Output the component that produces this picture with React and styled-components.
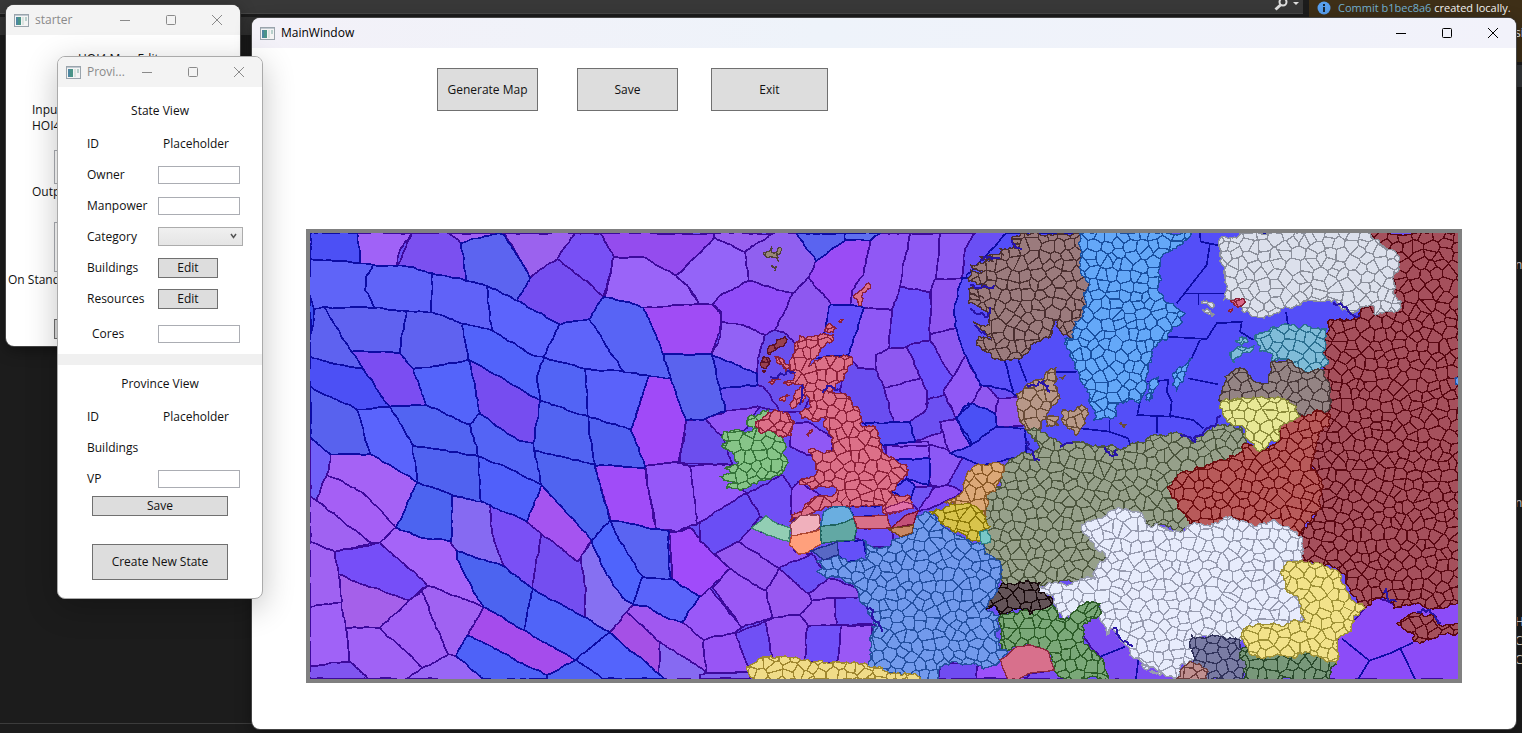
import React from "react";
import styled, { createGlobalStyle, css } from "styled-components";

const Global = createGlobalStyle`
  * { box-sizing: border-box; }
  body { margin: 0; background: #1c1c1c; overflow: hidden; }
  body, button, input, select {
    font-family: "Open Sans", "Noto Sans", sans-serif;
    font-size: 12px;
    line-height: 16px;
    color: #111;
  }
`;

/* ---------- map geometry ---------- */

const hash = (a, b) => {
  const s = Math.sin(a * 12.9898 + b * 78.233) * 43758.5453;
  return s - Math.floor(s);
};

const parse = (text, dx, dy) =>
  text.trim().split(/\s+/).map((pair) => {
    const [x, y] = pair.split(",").map(Number);
    return [x + dx, y + dy];
  });

// Midpoint displacement; the offset depends only on the edge, so shared borders agree.
const roughEdge = (a, b, amount, depth, limit = 9) => {
  const len = Math.hypot(b[0] - a[0], b[1] - a[1]);
  if (!depth || len < 9) return [a];
  const flip = a[0] > b[0] || (a[0] === b[0] && a[1] > b[1]) ? -1 : 1;
  const span = Math.min(len * amount, limit) / len;
  const k = (hash(a[0] + b[0], a[1] + b[1]) - 0.5) * span * flip;
  const mid = [
    (a[0] + b[0]) / 2 - (b[1] - a[1]) * k,
    (a[1] + b[1]) / 2 + (b[0] - a[0]) * k,
  ];
  return [
    ...roughEdge(a, mid, amount, depth - 1, limit),
    ...roughEdge(mid, b, amount, depth - 1, limit),
  ];
};

const rough = (pts, amount, depth, limit) =>
  pts.flatMap((p, i) => roughEdge(p, pts[(i + 1) % pts.length], amount, depth, limit));

const toPath = (pts, open) =>
  "M" + pts.map((p) => Math.round(p[0]) + " " + Math.round(p[1])).join("L") + (open ? "" : "Z");

const clipHalf = (poly, s, t) => {
  const nx = t[0] - s[0];
  const ny = t[1] - s[1];
  const c = (nx * (s[0] + t[0]) + ny * (s[1] + t[1])) / 2;
  const out = [];
  poly.forEach((p, i) => {
    const q = poly[(i + 1) % poly.length];
    const dp = nx * p[0] + ny * p[1] - c;
    const dq = nx * q[0] + ny * q[1] - c;
    if (dp <= 0) out.push(p);
    if (dp * dq < 0) {
      const r = dp / (dp - dq);
      out.push([p[0] + (q[0] - p[0]) * r, p[1] + (q[1] - p[1]) * r]);
    }
  });
  return out;
};

const STEP = 35;
const ROW = 30;
const seed = (i, j) => [
  (i + (j % 2 ? 0.5 : 0) + (hash(i, j) - 0.5) * 0.8) * STEP,
  (j + (hash(j + 311, i + 97) - 0.5) * 0.8) * ROW,
];

const provinceCells = (pts) => {
  const xs = pts.map((p) => p[0]);
  const ys = pts.map((p) => p[1]);
  const i0 = Math.floor(Math.min(...xs) / STEP) - 1;
  const i1 = Math.ceil(Math.max(...xs) / STEP) + 1;
  const j0 = Math.floor(Math.min(...ys) / ROW) - 1;
  const j1 = Math.ceil(Math.max(...ys) / ROW) + 1;
  let d = "";
  for (let j = j0; j <= j1; j++) {
    for (let i = i0; i <= i1; i++) {
      const s = seed(i, j);
      let poly = [[-70, -70], [70, -70], [70, 70], [-70, 70]].map((o) => [s[0] + o[0], s[1] + o[1]]);
      for (let b = -2; b <= 2; b++)
        for (let a = -2; a <= 2; a++) if (a || b) poly = clipHalf(poly, s, seed(i + a, j + b));
      d += toPath(poly);
    }
  }
  return d;
};

/* Each sheet: origin of its local coordinates, then [colour, outline] pairs. */
const SEA = [
  [0, 0, [
    ["#4c50f5", "30,24 172,24 181,115 30,101"],
    ["#a062f7", "172,24 335,24 300,75 288,125 220,120 181,115"],
    ["#7b50f0", "335,24 446,24 482,54 498,168 395,144 340,126 288,125"],
    ["#a060f2", "446,24 612,24 600,26 482,54"],
    ["#5c64f0", "482,54 600,26 612,30 690,158 652,227 560,182 498,168"],
    ["#9b62ee", "612,24 824,24 810,62 772,102 690,158"],
    ["#7850f5", "824,24 902,24 942,96 930,150 912,215 772,102"],
    ["#744df0", "772,102 912,215 868,282 778,298 652,227 690,158"],
    ["#944cee", "902,24 1242,24 1242,38 1128,152 1040,100 942,96"],
    ["#9a64f8", "942,96 1040,100 1128,152 1165,185 1198,238 1030,248 912,215"],
    ["#5f64f8", "30,101 181,115 220,120 197,160 195,195 225,248 150,247 70,245 42,253 30,215"],
    ["#6064f8", "220,120 340,126 395,144 395,262 318,258 225,248 195,195 197,160"],
    ["#6062f8", "395,144 498,168 560,182 575,315 488,296 402,264 395,262"],
    ["#5c64fc", "560,182 652,227 778,298 732,398 685,385 630,350 575,315"],
    ["#3c50f0", "30,215 42,253 40,300 30,330"],
    ["#5e62f0", "42,253 70,245 155,380 190,432 110,418 30,396 30,330 40,300"],
    ["#6062f0", "70,245 150,247 225,248 318,258 300,385 155,380"],
    ["#5f62f0", "318,258 395,262 402,264 488,296 505,404 340,432 300,385"],
    ["#5263fa", "488,296 575,315 630,350 685,385 732,398 710,468 720,526 505,404"],
    ["#5e64fa", "778,298 868,282 970,440 855,432 732,398"],
    ["#5864f5", "868,282 912,215 1030,248 1090,388 1112,458 1045,452 970,440"],
    ["#a04cf5", "1030,248 1198,238 1237,238 1265,270 1260,315 1235,388 1090,388"],
    ["#7b4df2", "155,380 300,385 340,432 378,540 270,545 190,432"],
    ["#4c50f5", "30,396 110,418 190,432 270,545 170,553 30,484"],
    ["#5464fa", "340,432 505,404 540,565 510,598 378,540"],
    ["#764df0", "505,404 720,526 700,655 660,648 540,565"],
    ["#5264f5", "732,398 855,432 865,575 720,526 710,468"],
    ["#5a62fa", "855,432 970,440 1045,452 1020,530 992,614 930,595 865,575"],
    ["#a04af8", "1045,452 1112,458 1158,585 1135,712 1035,722 992,614"],
    ["#5a63ee", "1090,388 1235,388 1260,490 1275,560 1215,582 1158,585 1112,458"],
    ["#5862ee", "30,484 170,553 212,688 92,688 30,635"],
    ["#5a64fc", "170,553 270,545 338,660 352,772 212,688"],
    ["#5264f2", "270,545 378,540 510,598 535,695 338,660"],
    ["#5464f5", "510,598 540,565 660,648 700,655 702,677 725,780 650,740 535,695"],
    ["#5264f2", "720,526 865,575 885,717 702,677 700,655"],
    ["#5060f0", "865,575 930,595 992,614 1035,722 1035,728 885,722 885,717"],
    ["#7060f8", "30,635 92,688 80,750 50,827 30,815"],
  ]],
  [0, 660, [
    ["#a562f5", "92,28 212,28 352,112 288,248 190,145 80,90"],
    ["#a55ff5", "80,90 190,145 288,248 240,292 215,293 130,230 50,167"],
    ["#5062f0", "338,0 535,35 543,170 455,150 352,112"],
    ["#5060fa", "535,35 650,80 725,120 680,230 570,180 543,170"],
    ["#4c64f0", "352,112 455,150 452,290 370,278 288,248"],
    ["#866af2", "455,150 543,170 570,180 575,260 612,365 470,318 452,290"],
    ["#7a50f5", "570,180 680,230 722,265 698,430 612,365 575,260"],
    ["#a554f0", "725,120 875,285 832,350 722,265 680,230"],
    ["#5064f0", "702,17 885,57 930,225 875,285 725,120"],
    ["#a04cf8", "885,62 1035,68 1068,252 930,225"],
    ["#9558f8", "1035,62 1130,52 1170,62 1192,238 1130,260 1068,252"],
    ["#a062f2", "30,155 50,167 130,230 215,293 105,320 30,290"],
    ["#764ef8", "105,320 240,292 382,422 328,465 115,388"],
    ["#a564f8", "288,248 370,278 452,290 470,318 470,340 552,487 382,422 240,292"],
    ["#a062f2", "30,290 105,320 115,388 125,472 30,487"],
    ["#a560ea", "115,388 328,465 240,548 137,548 125,472"],
    ["#a060f5", "328,465 365,440 445,628 368,668 240,548"],
    ["#a062f2", "365,440 382,422 552,487 502,572 468,632 445,628"],
    ["#4c64f0", "470,318 612,365 698,430 672,555 552,487 470,340"],
    ["#744ef0", "722,265 832,350 842,340 858,430 855,517 698,430"],
    ["#8670f2", "842,340 875,285 920,390 975,465 1000,480 930,562 855,517 858,430"],
    ["#4f64fc", "875,285 930,225 960,290 1028,395 1000,480 975,465 920,390"],
    ["#5a64f2", "930,225 1068,252 1107,260 1107,370 1116,402 1028,395 960,290"],
    ["#a04bfa", "1107,260 1130,260 1170,248 1245,330 1290,370 1230,430 1200,455 1116,402"],
    ["#5a64fa", "1028,395 1116,402 1200,455 1145,532 1100,518 1035,482 1000,480"],
    ["#5064f8", "698,430 855,517 930,562 828,645 672,555"],
    ["#a54cec", "552,487 672,555 828,645 740,690 610,625 502,572"],
    ["#4e62f8", "502,572 610,625 740,690 740,702 550,702 468,632"],
    ["#5064f5", "740,690 828,645 912,702 740,702"],
    ["#5464fc", "828,645 930,562 1075,685 1095,702 912,702"],
    ["#a550e6", "930,562 980,502 1080,590 1075,685"],
    ["#a058f0", "980,502 1000,480 1035,482 1100,518 1145,532 1210,585 1220,685 1150,635 1080,590"],
    ["#866af2", "1080,590 1150,635 1220,685 1240,702 1095,702 1075,685"],
    ["#a062f5", "137,548 240,548 368,668 320,702 205,702 150,650"],
    ["#a062f7", "30,487 125,472 137,548 150,650 30,662"],
    ["#8055f0", "30,662 150,650 205,702 30,702"],
    ["#9866f5", "320,702 368,668 445,628 468,632 550,702"],
    ["#9a58f8", "1145,532 1200,455 1230,430 1325,548 1305,565 1210,585"],
  ]],
  [1140, 0, [
    ["#9860f0", "102,24 280,24 195,80 102,38"],
    ["#9464f8", "102,38 195,80 205,168 130,205 97,238 55,235 25,185 -12,152"],
    ["#9060f0", "280,24 350,24 408,108 385,157 340,205 205,168 195,80"],
    ["#5a64f0", "350,24 495,24 495,45 408,108"],
    ["#6070f0", "495,24 600,24 572,46 495,45"],
    ["#9a4cf5", "408,108 495,45 572,46 550,150 515,200 510,240 452,238 385,157"],
    ["#9058f5", "572,46 600,24 692,24 660,185 636,255 552,248 510,240 515,200 550,150"],
    ["#8e5af5", "692,24 780,24 767,163 752,200 660,185"],
    ["#8c5af5", "780,24 885,24 855,70 847,158 767,163"],
    ["#904df8", "205,168 340,205 285,315 255,330 190,300 125,290 125,265 97,238 130,205"],
    ["#8e58f0", "340,205 385,157 452,238 430,330 350,360 310,320 285,315"],
    ["#9262f5", "125,290 190,300 255,330 232,400 230,445 95,390 122,330"],
    ["#6a50ee", "285,315 310,320 350,360 430,330 450,420 370,560 300,560 250,485 232,480 230,445 232,400 255,330"],
    ["#5a52f0", "95,390 230,445 232,480 160,485 120,495"],
    ["#6450fa", "452,238 510,240 552,248 505,390 400,400 430,330"],
    ["#8f58f5", "552,248 636,255 625,370 587,390 587,435 535,430 505,390"],
    ["#6a50fa", "660,185 752,200 750,345 680,365 625,370 636,255"],
    ["#8e55f0", "767,163 847,158 822,260 828,310 750,330 752,200"],
    ["#6a4ef0", "505,390 535,430 587,435 612,488 640,590 550,595 480,500"],
    ["#8e58f0", "587,390 625,370 680,365 722,460 612,488 587,435"],
    ["#6a50fa", "680,365 750,345 820,458 795,510 742,525 742,500 722,460"],
    ["#8c58f0", "750,330 828,310 860,395 820,458 750,345"],
    ["#8c58f5", "612,488 722,460 742,500 740,550 690,590 640,590"],
    ["#6c50f2", "742,525 795,510 828,578 780,625 705,650 690,590 740,550"],
    ["#5f50f5", "550,595 640,590 690,590 705,650 610,662"],
    ["#9058f5", "610,662 705,650 745,650 750,700 750,820 640,740"],
    ["#8c58f5", "860,395 900,480 865,535 828,578 795,510 820,458"],
    ["#9058f5", "705,650 780,625 828,578 870,660 752,695 745,650"],
    ["#6a50f0", "120,495 160,485 232,480 250,485 300,560 240,545 135,560"],
    ["#9155f5", "75,580 135,560 240,545 200,610 130,640"],
    ["#6c4eee", "20,585 75,580 130,640 160,720 0,715"],
    ["#9058f5", "330,600 380,590 460,640 450,690 380,690 330,665"],
    ["#5a50f8", "847,158 900,150 1000,500 900,480 860,395 828,310 822,260"],
    ["#4a50f5", "828,578 865,535 930,560 920,650 870,660"],
  ]],
  [1200, 660, [
    ["#9458fa", "-30,62 100,58 110,110 140,145 0,230 -8,238"],
    ["#6a4ef5", "0,230 140,145 165,185 180,215 155,250 115,290 45,328 0,290"],
    ["#9055f5", "155,250 272,290 285,320 335,325 238,370 115,290"],
    ["#9458f0", "45,328 115,290 238,370 198,435 90,370"],
    ["#9a58f5", "90,370 198,435 218,518 125,548 38,430"],
    ["#9858f0", "238,370 325,445 335,467 300,510 218,518 198,435"],
    ["#6a50f5", "238,370 335,325 385,400 325,445"],
    ["#9055f0", "325,445 385,400 470,430 480,455 405,460 335,467"],
    ["#9858f0", "335,467 405,460 410,540 325,545 300,510"],
    ["#7050f5", "405,460 480,455 530,540 410,540"],
    ["#7050f5", "105,565 195,530 218,650 150,680"],
    ["#9858f2", "195,530 218,518 300,510 325,545 312,650 218,650"],
    ["#7050f8", "325,545 410,540 425,542 410,655 312,650"],
    ["#9a58f5", "425,542 515,540 520,660 410,655"],
    ["#9855f5", "10,585 105,565 150,680 20,688"],
    ["#8060f0", "0,688 150,680 150,702 0,702"],
    ["#7050f5", "140,145 245,90 275,130 275,250 180,215 165,185"],
    ["#9055f5", "275,130 295,110 360,150 310,200 275,230"],
    ["#5f50f8", "590,45 690,40 685,120 620,100"],
    ["#9058f8", "560,0 690,0 690,40 560,50"],
    ["#8c58f5", "690,0 790,30 740,125 690,120"],
    ["#5f50f8", "575,140 620,100 645,125 630,170"],
    ["#7055f5", "645,125 705,125 655,200 630,170"],
    ["#9050f5", "705,125 745,120 790,140 690,190 655,200"],
    ["#5c4cf0", "445,182 555,182 560,212 462,215"],
    ["#6a50f8", "470,250 575,250 580,280 570,305 515,305 465,280"],
    ["#6450f8", "412,290 490,285 500,350 440,350 415,335"],
    ["#704cf2", "715,702 720,655 830,650 840,702"],
    ["#9c50fa", "830,665 900,640 980,702 830,702"],
  ]],
  [1950, 0, [
    ["#544ef8", "170,24 1300,24 1300,640 250,720 140,620 145,520 205,515 60,400 50,150"],
    ["#9058f5", "-20,500 50,390 70,440 100,475 65,535 20,580"],
    ["#9058f0", "100,475 145,520 135,565 65,535"],
    ["#9055f0", "145,520 205,515 225,600 140,605 135,565"],
    ["#4a50f5", "20,580 65,535 135,565 140,605 65,660"],
    ["#9058f5", "-30,590 20,580 65,660 0,685"],
    ["#5c50f5", "65,660 140,605 225,610 230,690 90,720 0,685"],
  ]],
  [2790, 660, [
    ["#8c4cf8", "280,704 330,570 405,490 430,450 500,480 620,470 684,450 690,704"],
  ]],
  [2040, 660, [
    ["#7c4cf2", "290,550 350,505 440,590 500,650 610,704 385,704 360,635"],
    ["#7c4cf2", "140,702 150,685 225,675 250,704"],
  ]],
];

const SEA_LINES = [
  [1950, 0, "205,405 230,470"],
  [1950, 0, "310,442 380,440"],
  [1950, 0, "750,24 752,50 825,65"],
  [1950, 0, "780,55 770,120 680,235"],
  [1950, 0, "700,205 825,205"],
  [1950, 0, "745,205 745,240"],
  [1950, 0, "875,290 800,295 770,342 650,335"],
  [1950, 0, "750,345 725,400"],
  [1950, 0, "590,470 655,465 650,500 665,530 660,575 562,570 570,530"],
  [1950, 0, "715,460 805,478"],
  [1950, 0, "660,572 730,585 760,610"],
  [1950, 0, "620,575 620,625"],
  [1950, 0, "478,585 478,620 390,610"],
  [1950, 0, "478,620 535,640 540,660"],
  [2700, 0, "50,295 125,290 120,320 160,345"],
  [2700, 0, "258,260 264,300"],
  [2790, 660, "335,580 418,647 385,702"],
  [2790, 660, "418,647 480,625 550,592"],
  [2790, 660, "510,608 555,702"],
  [2040, 660, "360,635 435,605"],
  [2040, 660, "475,645 468,702"],
];

/* fill, border, sheet origin, outlines */
const LANDS = [
  ["#a5505c", "#5a0812", 2700, 0, ["500,20 790,20 790,1125 710,1150 670,1145 580,1150 560,1120 520,1125 495,1150 450,1100 430,1045 355,1012 310,1015 295,930 350,860 365,770 330,720 320,560 385,465 365,440 385,405 370,395 370,340 385,320 383,290 400,285 480,278 480,240 530,240"]],
  ["#a5505c", "#5a0812", 2790, 660, ["500,535 560,505 620,515 635,545 690,538 690,562 640,568 590,580 570,597 550,590 555,570"]],
  ["#dce0ec", "#8c909c", 2700, 0, ["60,40 110,40 120,24 510,24 545,60 598,95 580,150 580,195 605,230 590,260 525,270 510,240 485,245 470,260 440,255 410,225 290,240 240,260 160,275 130,262 125,240 70,225 75,130 60,70", "5,235 20,228 42,240 38,250", "8,255 22,250 42,268 36,276"]],
  ["#d86888", "#8c2038", 2700, 0, ["92,228 115,220 137,232 128,242 108,243", "85,258 98,252 92,262"]],
  ["#9b7b7d", "#4b2f30", 1950, 0, ["225,24 388,24 390,90 395,150 420,180 400,205 410,240 375,290 365,345 340,330 325,285 308,285 305,330 260,350 210,402 140,400 80,360 85,335 125,345 70,290 120,300 110,260 55,235 60,205 100,220 55,190 110,180 55,170 60,135 100,140 60,120 130,110 90,95 160,90 150,70 210,60 185,40"]],
  ["#64a8f8", "#1a50a0", 1950, 0, ["388,24 725,24 690,60 635,95 630,150 625,200 660,235 705,265 690,300 650,345 610,365 605,410 585,470 570,530 500,540 490,580 430,585 420,520 385,440 350,370 345,340 370,340 375,290 410,240 400,205 420,180 395,150 390,90", "668,445 690,425 728,400 705,450 680,498 668,480", "588,525 600,480 625,455 615,490 598,528"]],
  ["#b89888", "#6a4c38", 1950, 0, ["200,505 240,475 280,465 290,440 318,428 310,480 330,520 295,560 270,615 225,612 205,570", "280,575 325,575 325,600 290,605", "335,560 370,560 395,540 412,550 400,600 375,630 345,600", "508,595 530,598 522,608", "330,458 345,452 338,463"]],
  ["#80bcd8", "#2c7090", 2700, 0, ["165,330 220,305 280,298 330,305 380,310 372,340 370,390 385,410 340,440 310,440 270,405 220,410 215,385 180,380 172,350", "105,348 125,335 145,350 125,360", "95,380 130,368 162,362 155,378 120,395 102,412"]],
  ["#948484", "#4a3a3a", 2700, 0, ["55,525 75,455 120,428 165,470 205,475 215,410 270,405 310,440 370,435 385,470 390,545 360,562 305,575 250,530 80,530"]],
  ["#96a08a", "#4c563e", 2040, 660, ["20,150 65,120 70,60 100,40 180,10 140,-45 200,-35 250,0 310,-10 360,5 410,10 490,-5 530,-30 600,-35 640,-5 710,-60 780,-55 800,-10 790,20 720,45 650,65 600,85 640,235 600,262 560,245 510,245 430,200 305,240 320,270 375,325 370,350 340,380 345,410 220,415 65,418 65,360 10,320 15,260"]],
  ["#b85a5a", "#6e0e10", 2040, 660, ["562,125 600,85 650,65 720,45 790,20 795,-5 840,20 900,-20 900,-55 960,-85 1000,-100 1045,-95 1050,-60 1020,-40 1010,0 995,60 1025,110 1010,200 955,275 900,240 870,230 825,245 750,215 690,245 630,235 600,195 590,165"]],
  ["#e8e896", "#8c8c3c", 2700, 0, ["60,550 80,520 210,520 235,515 290,545 300,575 240,605 235,645 180,680 140,640 135,610 80,590"]],
  ["#e8ecfc", "#989cb0", 2040, 660, ["305,240 340,225 400,195 430,195 490,215 510,245 530,235 560,248 600,262 630,240 690,245 750,215 825,245 870,230 900,240 960,275 970,355 930,350 910,400 960,460 970,520 920,560 800,560 780,590 660,575 640,600 650,645 600,660 595,700 585,702 520,665 460,640 435,600 400,550 380,570 360,520 360,480 320,470 280,500 250,528 230,500 220,450 180,445 175,420 220,415 345,405 340,380 375,350 375,325 320,270", "485,660 510,665 500,675", "510,680 550,685 540,692"]],
  ["#7aa878", "#2c5c28", 2040, 660, ["60,515 150,495 215,480 235,510 255,528 280,500 320,470 360,475 355,515 305,545 310,590 360,640 385,704 260,704 215,670 210,625 150,600 80,625 55,590"]],
  ["#645458", "#180a0c", 2040, 660, ["10,490 50,430 85,415 180,412 175,440 200,455 218,460 205,485 150,510 140,490 90,500 60,508 40,480"]],
  ["#7a7ca4", "#30325a", 2040, 660, ["635,570 660,578 720,575 780,585 790,640 800,670 780,704 680,704 640,650 630,600"]],
  ["#c09090", "#6c3c3c", 2040, 660, ["600,680 630,650 680,670 680,704 590,704"]],
  ["#78987a", "#2a4a2c", 2790, 660, ["35,610 180,625 220,620 320,650 290,704 30,704 50,660 30,630"]],
  ["#f2e28a", "#a09238", 2790, 660, ["155,375 185,350 265,352 330,385 350,440 405,490 370,520 365,560 330,575 320,655 220,625 180,635 60,628 35,580 50,545 180,535 220,530 215,480 165,430"]],
  ["#dca878", "#8c5a28", 1200, 660, ["800,90 830,60 880,52 908,60 905,100 885,140 860,150 858,215 830,190 790,185 770,180 735,172 765,160 790,130"]],
  ["#729aec", "#2450a0", 1200, 660, ["500,310 490,285 515,305 575,300 600,275 640,265 648,210 690,200 720,225 760,265 845,295 855,330 900,350 905,400 890,440 855,490 895,510 900,550 885,560 895,600 925,625 890,660 850,672 820,655 770,650 720,665 715,710 655,710 500,665 515,600 515,545 530,545 520,520 500,485 475,455 470,430 430,405 380,400 350,380 375,375 350,350 400,335 440,350 500,345"]],
  ["#d8c44c", "#8a7808", 1200, 660, ["690,200 740,185 790,178 835,190 860,235 870,245 840,260 845,290 800,280 760,260 715,225"]],
  ["#f0dc88", "#a08830", 1200, 660, ["140,665 200,635 225,640 300,645 380,652 500,658 560,680 650,690 660,712 165,712"]],
  ["#86c488", "#36743a", 1140, 0, ["200,590 215,570 265,555 270,565 240,590 225,605 245,625 270,615 305,635 318,665 318,720 300,750 240,765 190,790 140,790 170,774 120,755 155,745 135,730 175,710 150,680 125,665 150,650 125,635 130,620 190,620 220,610"]],
  ["#dc7088", "#8c2038", 1140, 0, [
    "360,332 400,335 460,330 455,350 420,380 390,415 385,425 430,395 500,392 518,402 500,440 480,470 445,505 500,515 525,545 540,595 585,605 600,640 620,690 650,710 680,720 682,750 650,780 630,800 690,815 700,850 650,860 610,865 615,840 540,845 500,842 480,850 440,845 390,865 330,890 335,870 370,850 405,815 460,810 470,790 390,785 358,778 360,765 410,745 405,710 385,680 400,670 430,685 455,680 460,640 430,600 440,580 400,590 365,580 360,565 395,545 380,510 350,540 335,550 345,505 370,480 310,475 345,450 330,430 335,400 345,375",
    "225,600 250,575 280,560 320,562 342,595 335,630 300,632 270,615 245,625",
    "520,215 545,195 560,175 570,178 545,215 545,242 536,240",
    "435,320 450,295 468,310 460,322", "475,290 490,283 484,292", "380,628 398,615 386,635",
    "285,395 305,400 330,425 318,440 295,415", "297,525 320,508 328,512 312,530", "265,472 290,460 300,464 275,478",
  ]],
  ["#984050", "#5a1028", 1140, 0, ["265,370 290,345 315,335 310,365 270,390", "250,395 268,400 258,430 248,428", "248,438 256,438 252,444"]],
  ["#988878", "#50403c", 1140, 0, ["250,85 268,80 275,65 283,85 300,66 305,76 290,90 295,108 280,98", "274,122 290,125 285,138"]],
];

const TILES = [
  ["#92ceb4", "#3c8070", 1200, 660, "155,250 198,212 235,238 272,248 268,290 200,270"],
  ["#f0b0bc", "#8c3c50", 1200, 660, "270,240 300,212 355,208 362,245 330,262 275,272"],
  ["#ffa07c", "#b04830", 1200, 660, "275,272 330,262 360,252 365,295 335,315 295,328 268,300"],
  ["#6aaee0", "#205c94", 1200, 660, "362,245 370,200 400,185 445,188 462,222 420,235"],
  ["#62a8a4", "#206460", 1200, 660, "362,245 420,235 462,222 470,250 462,285 365,295"],
  ["#d87088", "#8c2038", 1200, 660, "460,215 560,210 575,250 470,248"],
  ["#e070a8", "#8c2058", 1200, 660, "555,190 610,170 635,175 640,190 560,205"],
  ["#c45078", "#781038", 1200, 660, "575,250 610,215 655,197 640,238"],
  ["#c88864", "#784020", 1200, 660, "565,252 640,240 635,265 600,275"],
  ["#5868c4", "#20308c", 1200, 660, "332,318 412,290 415,330 370,345"],
  ["#78c8c8", "#308484", 1200, 660, "840,260 860,255 872,275 870,292 845,297"],
  ["#d8708c", "#8c2840", 2040, 660, "60,645 110,605 150,600 205,620 222,675 150,685 115,704 85,704"],
  ["#64a0f8", "#2450a0", 2700, 0, "764,460 780,455 780,480 768,478"],
];

const FJORDS = [
  [1950, 0, "60,180 130,190 132,180"], [1950, 0, "62,250 105,275 120,245"], [1950, 0, "75,300 110,330"],
  [1950, 0, "90,105 150,100"], [1950, 0, "185,45 215,75"], [1950, 0, "230,480 280,470 300,500"],
  [1950, 0, "225,650 250,690 270,705"], [1950, 0, "330,665 370,655"], [1950, 0, "465,665 480,690 500,690 498,675"],
  [1950, 0, "690,630 735,650 760,630 800,590 812,570"], [2790, 660, "470,430 478,470 500,472"],
  [2790, 660, "560,500 600,495 632,535"], [2040, 660, "400,550 415,570 430,590 460,605"],
  [1200, 660, "500,485 520,495 522,525 545,560"], [1140, 0, "430,505 440,490 475,492"],
  [1140, 0, "365,480 360,540"], [1140, 0, "270,455 320,440 345,445"], [2700, 0, "400,230 410,240 480,270"],
];

const isBlue = (fill) => parseInt(fill.slice(1, 3), 16) < 0x68;
const onTop = (p) => Number(isBlue(p.fill) && p.fill !== "#544ef8");

const seaPaths = SEA.flatMap(([dx, dy, list]) =>
  list.map(([fill, text]) => ({
    fill,
    stroke: isBlue(fill) ? "#0c0ca4" : "#3c0a9c",
    d: toPath(rough(parse(text, dx, dy), 0.2, 4, 5)),
  }))
).sort((a, b) => onTop(a) - onTop(b));

const landPaths = LANDS.map(([fill, stroke, dx, dy, outlines]) => {
  const shapes = outlines.map((o) => rough(parse(o, dx, dy), 0.6, 4, 14));
  return {
    fill,
    stroke,
    d: shapes.map((s) => toPath(s)).join(""),
    cells: shapes.slice(0, 2).map(provinceCells).join(""),
  };
});

function ProvinceMap() {
  return (
    <MapDrawing viewBox="30 24 3444 1338" role="img" aria-label="Province map" shapeRendering="crispEdges">
      <rect x="30" y="24" width="3444" height="1338" fill="#6a4ff4" />
      <g strokeWidth="5" strokeLinejoin="round">
        {seaPaths.map((p, i) => <path key={i} d={p.d} fill={p.fill} stroke={p.stroke} />)}
      </g>
      <g fill="none" stroke="#0c0ca4" strokeWidth="5">
        {SEA_LINES.map(([x, y, t], i) => (
          <polyline key={i} points={parse(t, x, y).join(" ")} />
        ))}
      </g>
      {landPaths.map((p, i) => (
        <g key={i} stroke={p.stroke} strokeLinejoin="round">
          <clipPath id={"land" + i}><path d={p.d} /></clipPath>
          <path d={p.d} fill={p.fill} strokeWidth="4" />
          <path d={p.cells} fill="none" strokeWidth="4" clipPath={`url(#land${i})`} />
        </g>
      ))}
      {TILES.map(([fill, stroke, x, y, t], i) => (
        <path key={i} d={toPath(rough(parse(t, x, y), 0.15, 3, 5))} fill={fill} stroke={stroke} strokeWidth="4" />
      ))}
      <g fill="none" stroke="#2814a8" strokeWidth="6">
        {FJORDS.map(([x, y, t], i) => (
          <path key={i} d={toPath(parse(t, x, y).flatMap((p, k, all) => (k + 1 < all.length ? roughEdge(p, all[k + 1], 0.8, 3, 16) : [p])), true)} />
        ))}
      </g>
    </MapDrawing>
  );
}

/* ---------- desktop ---------- */

const Desktop = styled.main`
  position: relative;
  height: 100vh;
  overflow: hidden;
  display: grid;
  grid-template-columns: 1fr 213px;
  column-gap: 6px;
  background: #1c1c1c;
`;

const Editor = styled.section`
  display: flex;
  flex-direction: column;
  min-width: 0;
`;

const TopBar = styled.div`
  height: 14px;
  display: flex;
  justify-content: flex-end;
  gap: 4px;
  padding-right: 4px;
  background: #383838;
  border-bottom: 1px solid #484848;
`;

const SubBar = styled.div`
  height: 18px;
  margin-top: 3px;
  background: #333;
`;

const StatusLine = styled.div`
  height: 10px;
  margin-top: auto;
  border-top: 1px solid #3c3c3c;
`;

const SidePane = styled.aside`
  display: flex;
  flex-direction: column;
  min-width: 0;
  overflow: hidden;
  color: #ddd;
`;

const Notice = styled.div`
  height: 62px;
  padding-left: 8px;
  background: #3e2f17;
  color: #f4f4f4;
  white-space: nowrap;
`;

const NoticeRow = styled.p`
  margin: 0;
  display: flex;
  align-items: center;
  gap: 7px;
  font-size: 11px;
  svg { flex: none; }
  a { color: #72b0d0; text-decoration: none; }
`;

const Snippet = styled.p`
  margin: ${(p) => p.$before || 0}px 0 0;
  padding-left: ${(p) => p.$indent || 206}px;
  height: 19px;
  white-space: nowrap;
`;

const Band = styled.div`
  height: 22px;
  margin-top: 3px;
  background: #333638;
`;

/* ---------- windows ---------- */

const places = {
  starter: css`left: 6px; top: 5px; width: 234px; height: 341px;`,
  main: css`left: 252px; right: 6px; top: 18px; bottom: 4px;`,
  province: css`left: 57px; top: 56px; width: 206px;`,
};

const Frame = styled.section`
  position: absolute;
  ${(p) => places[p.$place]}
  display: flex;
  flex-direction: column;
  overflow: hidden;
  background: #fff;
  border: ${(p) => (p.$place === "province" ? "1px solid #aaa" : "0")};
  border-radius: 8px;
  box-shadow: ${(p) => (p.$place === "province" ? "0 8px 32px rgba(0, 0, 0, .24)" : "0 0 0 1px #444, 0 4px 16px rgba(0, 0, 0, .4)")};
`;

const TitleBar = styled.header`
  flex: none;
  height: 30px;
  display: flex;
  align-items: center;
  padding-left: 8px;
  background: ${(p) => (p.$active ? "linear-gradient(90deg, #f3f1f8, #eef3fa 45%, #f2f2fa)" : "#f3f3f3")};
  color: ${(p) => (p.$active ? "#000" : "#8a8a8a")};
`;

const Title = styled.h1`
  flex: 1;
  min-width: 0;
  margin: 0 0 0 6px;
  font-size: 12px;
  font-weight: 400;
  white-space: nowrap;
`;

const Caption = styled.button`
  width: 46px;
  height: 30px;
  padding: 0;
  border: 0;
  background: none;
  color: inherit;
  display: grid;
  place-items: center;
`;

const AppIcon = () => (
  <svg width="15" height="13" viewBox="0 0 15 13" aria-hidden="true">
    <rect x="0.5" y="0.5" width="14" height="12" fill="#f4f4f4" stroke="#9aa4ac" />
    <rect x="1" y="1" width="13" height="1" fill="#c0c8d0" />
    <rect x="2" y="3" width="5" height="8" fill="#4a9488" />
    <rect x="2" y="3" width="2" height="8" fill="#4c86a0" />
    <rect x="8" y="3" width="2" height="8" fill="#dce4e0" />
    <rect x="11" y="3" width="2" height="4" fill="#b8d0cc" />
  </svg>
);

const GLYPHS = {
  Minimize: "M1 6.5h10",
  Maximize: "M2.5 1.5h7a1 1 0 0 1 1 1v7a1 1 0 0 1-1 1h-7a1 1 0 0 1-1-1v-7a1 1 0 0 1 1-1z",
  Close: "M1 1l10 10M11 1l-10 10",
};

function AppWindow({ place, title, active, children }) {
  return (
    <Frame $place={place} aria-label={title}>
      <TitleBar $active={active}>
        <AppIcon />
        <Title>{title}</Title>
        {Object.entries(GLYPHS).map(([name, d]) => (
          <Caption key={name} type="button" aria-label={name}>
            <svg width="12" height="12" viewBox="0 0 12 12" fill="none" stroke="currentColor"><path d={d} /></svg>
          </Caption>
        ))}
      </TitleBar>
      {children}
    </Frame>
  );
}

const PushButton = styled.button`
  width: ${(p) => p.$w}px;
  height: ${(p) => p.$h || 20}px;
  padding: 0;
  border: 1px solid #707070;
  border-radius: 0;
  background: #ddd;
`;

const Toolbar = styled.div`
  display: grid;
  grid-template-columns: 140px 134px auto;
  justify-content: start;
  padding: 20px 0 0 185px;
`;

const MapFrame = styled.div`
  margin: 118px 54px 0;
  border: 4px solid #808080;
`;

const MapDrawing = styled.svg`
  display: block;
  width: 100%;
  height: auto;
`;

const Panel = styled.div`
  display: flex;
  flex-direction: column;
  padding: ${(p) => p.$pad};
`;

const Heading = styled.h2`
  margin: 0 0 9px;
  font-size: 12px;
  font-weight: 400;
  text-align: center;
`;

const Field = styled.div`
  display: grid;
  grid-template-columns: 71px 1fr;
  align-items: center;
  justify-items: start;
  height: 31px;
  padding-left: 29px;
  margin-top: ${(p) => (p.$spaced ? 4 : 0)}px;
  > :first-child { padding-left: ${(p) => (p.$spaced ? 5 : 0)}px; }
`;

const Value = styled.span`
  padding-left: 5px;
`;

const TextBox = styled.input`
  width: 82px;
  height: 18px;
  padding: 0 2px;
  border: 1px solid #abadb3;
  background: #fff;
`;

const ComboWrap = styled.span`
  position: relative;
  display: flex;
  svg { position: absolute; right: 6px; top: 5px; pointer-events: none; }
`;

const Combo = styled.select`
  appearance: none;
  width: 85px;
  height: 19px;
  border: 1px solid #acacac;
  border-radius: 0;
  background: linear-gradient(#f0f0f0, #e5e5e5);
`;

const Divider = styled.hr`
  width: 100%;
  height: 11px;
  margin: 0;
  border: 0;
  background: #f0f0f0;
`;

const Actions = styled.div`
  display: flex;
  flex-direction: column;
  align-items: center;
  gap: 28px;
  padding-top: 2px;
`;

const StarterBody = styled.div`
  display: flex;
  flex-direction: column;
  align-items: flex-start;
  padding: 16px 0 0 2px;
`;

const StarterText = styled.label`
  margin: ${(p) => p.$before || 0}px 0 0 ${(p) => p.$indent || 0}px;
  white-space: pre;
`;

const StarterBox = styled.textarea`
  display: block;
  width: 120px;
  height: ${(p) => p.$h}px;
  margin: ${(p) => p.$before}px 0 0 46px;
  border: 1px solid #abadb3;
  resize: none;
`;

const StarterAction = styled.div`
  margin: 31px 0 0 46px;
`;

export default function App() {
  return (
    <>
      <Global />
      <Desktop>
        <Editor>
          <TopBar>
            <svg width="15" height="12" viewBox="0 0 15 12" fill="none" stroke="#ddd" aria-hidden="true">
              <circle cx="9" cy="2" r="3.5" strokeWidth="2" /><path d="M6.5 5L1.5 9.5" strokeWidth="3" />
            </svg>
            <svg width="6" height="8" viewBox="0 0 6 8" fill="#ddd" aria-hidden="true"><path d="M0 2h6l-3 3z" /></svg>
          </TopBar>
          <SubBar />
          <StatusLine />
        </Editor>
        <SidePane>
          <Notice>
            <NoticeRow>
              <svg width="14" height="14" viewBox="0 0 14 14" aria-hidden="true">
                <circle cx="7" cy="7" r="6.5" fill="#58a0f0" /><path d="M7 6v5M7 3v2" stroke="#182838" strokeWidth="2" />
              </svg>
              <span><a href="#commit">Commit b1bec8a6</a> created locally.</span>
            </NoticeRow>
            <Snippet $before={9} $indent={198}>si</Snippet>
          </Notice>
          <Band />
          <Snippet $before={170}>ne</Snippet>
          <Snippet $before={219}>n</Snippet>
          <Snippet $before={100}>H</Snippet>
          <Snippet>C</Snippet>
          <Snippet>C</Snippet>
        </SidePane>

        <AppWindow place="starter" title="starter">
          <StarterBody>
            <StarterText as="span" $indent={70}>HOI4 Map Editor</StarterText>
            <StarterText htmlFor="input-path" $before={35} $indent={24}>{"Input\nHOI4"}</StarterText>
            <StarterBox id="input-path" $h={34} $before={16} />
            <StarterText htmlFor="output-path" $indent={24}>Output</StarterText>
            <StarterBox id="output-path" $h={50} $before={22} />
            <StarterText as="span">On Standby</StarterText>
            <StarterAction><PushButton type="button" $w={100} aria-label="Start" /></StarterAction>
          </StarterBody>
        </AppWindow>

        <AppWindow place="main" title="MainWindow" active>
          <Toolbar>
            <PushButton type="button" $w={101} $h={43}>Generate Map</PushButton>
            <PushButton type="button" $w={101} $h={43}>Save</PushButton>
            <PushButton type="button" $w={117} $h={43}>Exit</PushButton>
          </Toolbar>
          <MapFrame><ProvinceMap /></MapFrame>
        </AppWindow>

        <AppWindow place="province" title="Provi...">
          <Panel $pad="16px 0 5px">
            <Heading>State View</Heading>
            <Field><span>ID</span><Value>Placeholder</Value></Field>
            <Field><label htmlFor="owner">Owner</label><TextBox id="owner" /></Field>
            <Field><label htmlFor="manpower">Manpower</label><TextBox id="manpower" /></Field>
            <Field>
              <label htmlFor="category">Category</label>
              <ComboWrap>
                <Combo id="category" />
                <svg width="7" height="8" viewBox="0 0 7 8" fill="none" stroke="#555" strokeWidth="1.5"><path d="M1 2l2.5 3.5L6 2" /></svg>
              </ComboWrap>
            </Field>
            <Field><span>Buildings</span><PushButton type="button" $w={60}>Edit</PushButton></Field>
            <Field><span>Resources</span><PushButton type="button" $w={60}>Edit</PushButton></Field>
            <Field $spaced><label htmlFor="cores">Cores</label><TextBox id="cores" /></Field>
          </Panel>
          <Divider />
          <Panel $pad="11px 0 18px">
            <Heading>Province View</Heading>
            <Field><span>ID</span><Value>Placeholder</Value></Field>
            <Field><span>Buildings</span></Field>
            <Field><label htmlFor="vp">VP</label><TextBox id="vp" /></Field>
            <Actions>
              <PushButton type="button" $w={136}>Save</PushButton>
              <PushButton type="button" $w={136} $h={36}>Create New State</PushButton>
            </Actions>
          </Panel>
        </AppWindow>
      </Desktop>
    </>
  );
}
